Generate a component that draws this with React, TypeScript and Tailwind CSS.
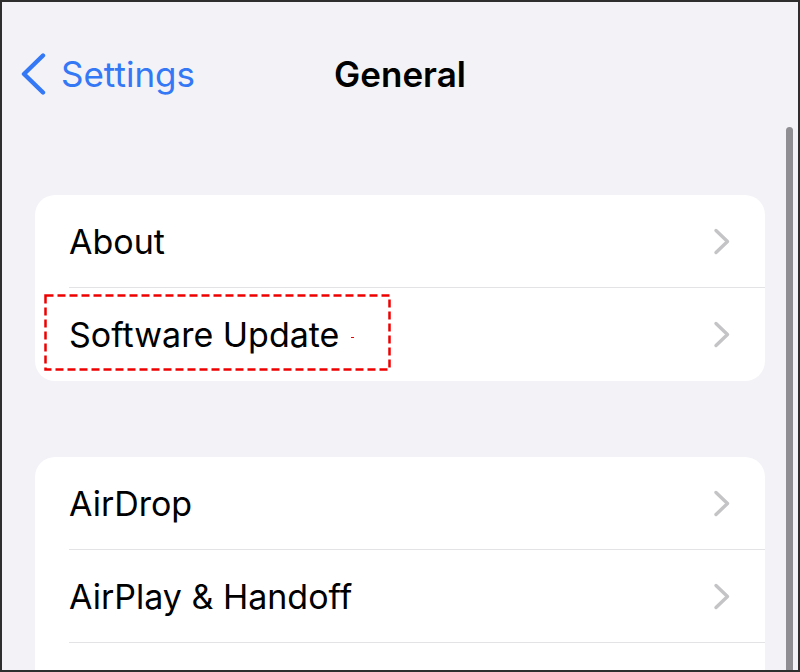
const ROWS_TOP = ["About", "Software Update"];
const ROWS_BOTTOM = ["AirDrop", "AirPlay & Handoff", ""];

function Chevron() {
  return (
    <svg width="18" height="27" viewBox="0 0 18 27" className="shrink-0">
      <path
        d="M3 2.5 L14.5 13.5 L3 24.5"
        fill="none"
        stroke="#c4c4c7"
        strokeWidth="3.4"
        strokeLinecap="round"
        strokeLinejoin="round"
      />
    </svg>
  );
}

function Row({ label, last }: { label: string; last?: boolean }) {
  return (
    <div className="pl-[34px]">
      <div
        className={
          "flex h-[93px] items-center justify-between pr-[34px] " +
          (last ? "" : "border-b border-[#e3e3e6]")
        }
      >
        <span className="text-[34px] text-black">{label}</span>
        <Chevron />
      </div>
    </div>
  );
}

function Card({ rows, openEnd }: { rows: string[]; openEnd?: boolean }) {
  return (
    <div className="ml-[33px] w-[730px] overflow-hidden rounded-[20px] bg-white">
      {rows.map((r, i) => (
        <Row key={i} label={r} last={!openEnd && i === rows.length - 1} />
      ))}
    </div>
  );
}

export default function App() {
  return (
    <div
      className="relative h-[672px] w-[800px] overflow-hidden border-2 border-[#2e2e2e] bg-[#f2f2f7]"
      style={{ fontFamily: "Inter, 'Liberation Sans', sans-serif" }}
    >
      {/* nav bar */}
      <div className="mt-[41px] grid h-[62px] grid-cols-[1fr_auto_1fr] items-center">
        <div className="flex items-center gap-[12px] pl-[17px]">
          <svg width="30" height="42" viewBox="0 0 30 42">
            <path
              d="M24 2.5 L5 21 L24 39.5"
              fill="none"
              stroke="#3478f6"
              strokeWidth="4.4"
              strokeLinecap="round"
              strokeLinejoin="round"
            />
          </svg>
          <span className="text-[35px] text-[#3478f6]">Settings</span>
        </div>
        <span className="text-[35px] font-semibold text-black">General</span>
        <div />
      </div>

      <div className="mt-[90px]">
        <Card rows={ROWS_TOP} />
      </div>
      <div className="mt-[76px]">
        <Card rows={ROWS_BOTTOM} openEnd />
      </div>

      {/* scroll indicator */}
      <div className="absolute top-[125px] right-[5px] h-[560px] w-[7px] rounded-full bg-[#8e8e93]" />

      {/* annotation */}
      <svg className="absolute top-[292px] left-[42px]" width="348" height="78">
        <rect
          x="1.5"
          y="1.5"
          width="344"
          height="74"
          fill="none"
          stroke="#ee0000"
          strokeWidth="2.5"
          strokeDasharray="8 4"
        />
      </svg>
      <div className="absolute top-[335px] left-[349px] h-[1px] w-[3px] bg-[#ee0000]" />
    </div>
  );
}
